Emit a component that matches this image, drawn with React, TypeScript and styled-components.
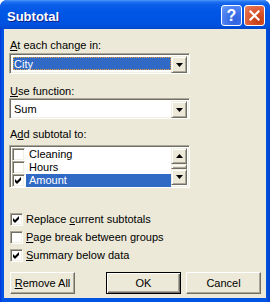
import React from 'react';
import styled, { createGlobalStyle } from 'styled-components';

const Global = createGlobalStyle`
  html, body { margin: 0; padding: 0; background: #ffffff; }
  body { font-family: "Liberation Sans", Arial, sans-serif; font-size: 11px; color: #000; }
`;

const Window = styled.div`
  width: 270px;
  height: 302px;
  box-sizing: border-box;
  display: flex;
  flex-direction: column;
  background: linear-gradient(to right, #0831d9 0px, #0054e3 2px, #0054e3 266px, #0040c8 270px);
  border-radius: 7px 7px 0 0;
  overflow: hidden;
`;

const TitleBar = styled.div`
  height: 29px;
  flex: none;
  box-sizing: border-box;
  display: flex;
  align-items: center;
  padding: 2px 5px 0 7px;
  background: linear-gradient(#4a98fa 0px, #1f6ff0 2px, #0a5ee8 5px, #0056e6 12px, #0054e3 20px, #0050dc 26px, #0046cc 29px);
`;

const Title = styled.div`
  flex: 1;
  margin-top: 2px;
  color: #ffffff;
  font-weight: bold;
  font-size: 13px;
  line-height: 15px;
  text-shadow: 1px 1px #0a1e8c;
`;

const CapButton = styled.div<{ $kind: 'help' | 'close' }>`
  width: 21px;
  height: 21px;
  box-sizing: border-box;
  border: 1px solid #ffffff;
  border-radius: 3px;
  margin-left: 2px;
  display: flex;
  align-items: center;
  justify-content: center;
  color: #ffffff;
  font-weight: bold;
  font-size: 16px;
  background: ${p =>
    p.$kind === 'help'
      ? 'radial-gradient(circle at 70% 75%, #2f62e0 0%, #3d72ea 40%, #5a8cf6 80%, #7aa5fb 100%)'
      : 'radial-gradient(circle at 70% 75%, #c23c12 0%, #d9532a 40%, #e47150 80%, #eb8c6c 100%)'};
`;

const Body = styled.div`
  flex: 1;
  margin: 0 4px 4px 4px;
  background: #ece9d8;
  padding: 10px 0 0 5px;
  display: flex;
  flex-direction: column;
`;

const Label = styled.div<{ $mt?: number; $mb?: number }>`
  height: 13px;
  line-height: 13px;
  margin-left: 1px;
  margin-top: ${p => p.$mt ?? 0}px;
  margin-bottom: ${p => p.$mb ?? 0}px;
  white-space: nowrap;
`;

const U = styled.span`
  text-decoration: underline;
`;

const Sunken = styled.div`
  box-sizing: border-box;
  border: 1px solid;
  border-color: #aca899 #ffffff #ffffff #aca899;
  box-shadow: inset 1px 1px #716f64, inset -1px -1px #f1efe2;
  background: #ffffff;
`;

const Combo = styled(Sunken)`
  width: 181px;
  height: 21px;
  padding: 2px;
  display: flex;
`;

const ComboField = styled.div`
  flex: 1;
  display: flex;
  padding: 1px 0 1px 1px;
`;

const ComboValue = styled.div<{ $selected?: boolean }>`
  flex: 1;
  box-sizing: border-box;
  border: 1px ${p => (p.$selected ? 'dotted #e9a23b' : 'solid transparent')};
  background: ${p => (p.$selected ? '#316ac5' : 'transparent')};
  color: ${p => (p.$selected ? '#ffffff' : '#000000')};
  line-height: 13px;
  padding-left: 0;
`;

const Raised = styled.div`
  box-sizing: border-box;
  background: #ece9d8;
  border: 1px solid;
  border-color: #f1efe2 #716f64 #716f64 #f1efe2;
  box-shadow: inset 1px 1px #ffffff, inset -1px -1px #aca899;
  display: flex;
  align-items: center;
  justify-content: center;
`;

const DropButton = styled(Raised)<{ $h?: number }>`
  width: 16px;
  height: ${p => p.$h ?? 17}px;
  flex: none;
`;

const Thumb = styled(Raised)`
  width: 16px;
  flex: 1;
`;

const ListBox = styled(Sunken)`
  width: 181px;
  height: 43px;
  padding: 2px;
  display: flex;
`;

const Rows = styled.div`
  flex: 1;
  display: flex;
  flex-direction: column;
`;

const ListRow = styled.div`
  height: 13px;
  display: flex;
  align-items: center;
`;

const ListText = styled.div<{ $selected?: boolean }>`
  flex: 1;
  height: 13px;
  line-height: 13px;
  margin-left: 1px;
  padding-left: 3px;
  background: ${p => (p.$selected ? '#316ac5' : 'transparent')};
  color: ${p => (p.$selected ? '#ffffff' : '#000000')};
`;

const ScrollBar = styled.div`
  width: 16px;
  display: flex;
  flex-direction: column;
`;

const Box = styled(Sunken)`
  width: 13px;
  height: 13px;
  flex: none;
  display: flex;
  align-items: center;
  justify-content: center;
`;

const CheckRows = styled.div`
  margin-top: 25px;
  display: flex;
  flex-direction: column;
  gap: 5px;
`;

const CheckRow = styled.div`
  height: 13px;
  display: flex;
  align-items: center;
  margin-left: 1px;
`;

const CheckText = styled.div`
  margin-left: 3px;
  line-height: 13px;
  white-space: nowrap;
`;

const ButtonRow = styled.div`
  margin-top: 10px;
  display: flex;
  padding-left: 1px;
`;

const PushButton = styled.div<{ $w: number; $ml?: number; $default?: boolean }>`
  width: ${p => p.$w}px;
  height: 22px;
  margin-left: ${p => p.$ml ?? 0}px;
  box-sizing: border-box;
  background: #ece9d8;
  display: flex;
  align-items: center;
  justify-content: center;
  border: 1px solid;
  border-color: ${p => (p.$default ? '#000000' : '#ffffff #716f64 #716f64 #ffffff')};
  box-shadow: ${p =>
    p.$default
      ? 'inset 1px 1px #ffffff, inset -1px -1px #716f64, inset -2px -2px #aca899'
      : 'inset -1px -1px #aca899'};
  line-height: 13px;
`;

const Tri = ({ up }: { up?: boolean }) => (
  <svg width="7" height="4" viewBox="0 0 7 4">
    <polygon points={up ? '3.5,0 7,4 0,4' : '0,0 7,0 3.5,4'} fill="#000" />
  </svg>
);

const Check = () => (
  <svg width="9" height="9" viewBox="0 0 9 9">
    <polygon points="1,3 3,5 7,1 7,4 3,8 1,6" fill="#000" />
  </svg>
);

const CheckBox = ({ checked }: { checked?: boolean }) => <Box>{checked && <Check />}</Box>;

export default function App() {
  return (
    <>
      <Global />
      <Window>
        <TitleBar>
          <Title>Subtotal</Title>
          <CapButton $kind="help">?</CapButton>
          <CapButton $kind="close">
            <svg width="11" height="11" viewBox="0 0 11 11">
              <path d="M1.5 1.5 L9.5 9.5 M9.5 1.5 L1.5 9.5" stroke="#fff" strokeWidth="2.2" strokeLinecap="square" />
            </svg>
          </CapButton>
        </TitleBar>
        <Body>
          <Label $mb={1}>
            <U>A</U>t each change in:
          </Label>
          <Combo>
            <ComboField>
              <ComboValue $selected>City</ComboValue>
            </ComboField>
            <DropButton>
              <Tri />
            </DropButton>
          </Combo>
          <Label $mt={11}>
            <U>U</U>se function:
          </Label>
          <Combo>
            <ComboField>
              <ComboValue>Sum</ComboValue>
            </ComboField>
            <DropButton>
              <Tri />
            </DropButton>
          </Combo>
          <Label $mt={9} $mb={4}>
            A<U>d</U>d subtotal to:
          </Label>
          <ListBox>
            <Rows>
              <ListRow>
                <CheckBox />
                <ListText>Cleaning</ListText>
              </ListRow>
              <ListRow>
                <CheckBox />
                <ListText>Hours</ListText>
              </ListRow>
              <ListRow>
                <CheckBox checked />
                <ListText $selected>Amount</ListText>
              </ListRow>
            </Rows>
            <ScrollBar>
              <DropButton $h={16}>
                <Tri up />
              </DropButton>
              <Thumb />
              <DropButton $h={16}>
                <Tri />
              </DropButton>
            </ScrollBar>
          </ListBox>
          <CheckRows>
            <CheckRow>
              <CheckBox checked />
              <CheckText>
                Replace <U>c</U>urrent subtotals
              </CheckText>
            </CheckRow>
            <CheckRow>
              <CheckBox />
              <CheckText>
                <U>P</U>age break between groups
              </CheckText>
            </CheckRow>
            <CheckRow>
              <CheckBox checked />
              <CheckText>
                <U>S</U>ummary below data
              </CheckText>
            </CheckRow>
          </CheckRows>
          <ButtonRow>
            <PushButton $w={65}>
              <span>
                <U>R</U>emove All
              </span>
            </PushButton>
            <PushButton $w={75} $ml={31} $default>
              OK
            </PushButton>
            <PushButton $w={75} $ml={5}>
              Cancel
            </PushButton>
          </ButtonRow>
        </Body>
      </Window>
    </>
  );
}
